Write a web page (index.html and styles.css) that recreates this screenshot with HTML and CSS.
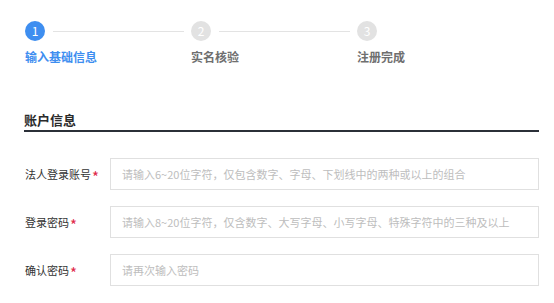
FILE: index.html
```html
<!DOCTYPE html>
<html lang="zh-CN">
<head>
<meta charset="utf-8">
<title>注册</title>
<link rel="stylesheet" href="styles.css">
</head>
<body>
<div class="page">
  <div class="steps">
    <div class="step active">
      <div class="step-head"><span class="dot">1</span><span class="line"></span></div>
      <div class="step-label">输入基础信息</div>
    </div>
    <div class="step">
      <div class="step-head"><span class="dot">2</span><span class="line"></span></div>
      <div class="step-label">实名核验</div>
    </div>
    <div class="step last">
      <div class="step-head"><span class="dot">3</span></div>
      <div class="step-label">注册完成</div>
    </div>
  </div>

  <h2 class="section-title">账户信息</h2>

  <form class="form">
    <div class="row">
      <label class="label">法人登录账号<span class="req">*</span></label>
      <input class="input" type="text" placeholder="请输入6~20位字符，仅包含数字、字母、下划线中的两种或以上的组合">
    </div>
    <div class="row">
      <label class="label">登录密码<span class="req">*</span></label>
      <input class="input" type="password" placeholder="请输入8~20位字符，仅含数字、大写字母、小写字母、特殊字符中的三种及以上">
    </div>
    <div class="row">
      <label class="label">确认密码<span class="req">*</span></label>
      <input class="input" type="password" placeholder="请再次输入密码">
    </div>
  </form>
</div>
</body>
</html>
```
FILE: styles.css
```css
* { box-sizing: border-box; }
body {
  margin: 0;
  background: #fff;
  font-family: "Noto Sans CJK SC", "Noto Sans", sans-serif;
  color: #333;
}
.page {
  width: 539px;
  padding: 21px 0 0 24px;
}
.steps {
  display: flex;
  padding-left: 1px;
}
.step {
  width: 166px;
  display: flex;
  flex-direction: column;
}
.step.last { width: auto; }
.step-head {
  display: flex;
  align-items: center;
  height: 20px;
}
.dot {
  width: 20px;
  height: 20px;
  border-radius: 50%;
  background: #e2e2e2;
  color: #fff;
  font-size: 12px;
  line-height: 20px;
  text-align: center;
  flex: none;
}
.line {
  flex: 1;
  height: 1px;
  background: #e3e3e3;
  margin: 0 7px 0 8px;
}
.step-label {
  margin-top: 8px;
  font-size: 12px;
  line-height: 16px;
  font-weight: 700;
  color: #6f6f6f;
}
.step.active .dot { background: #3e8ef0; }
.step.active .step-label { color: #3e8ef0; }

.section-title {
  margin: 46px 0 0;
  font-size: 13px;
  line-height: 18px;
  font-weight: 700;
  color: #2b2b2b;
  border-bottom: 2px solid #2b3038;
  padding-bottom: 1px;
}

.form {
  margin-top: 26px;
  display: flex;
  flex-direction: column;
  gap: 16px;
}
.row {
  display: flex;
  align-items: center;
}
.label {
  width: 86px;
  padding-left: 1px;
  font-size: 11px;
  font-weight: 400;
  color: #333;
  flex: none;
  display: flex;
  align-items: center;
}
.req {
  color: #e0284a;
  margin-left: 1px;
  font-size: 15px;
  line-height: 1;
  padding-top: 4px;
}
.input {
  flex: 1;
  height: 32px;
  border: 1px solid #e0e0e0;
  padding: 0 11px;
  font-family: inherit;
  font-size: 11px;
  color: #333;
  outline: none;
  border-radius: 0;
  background: #fff;
}
.input::placeholder { color: #bdbdbd; }
```
